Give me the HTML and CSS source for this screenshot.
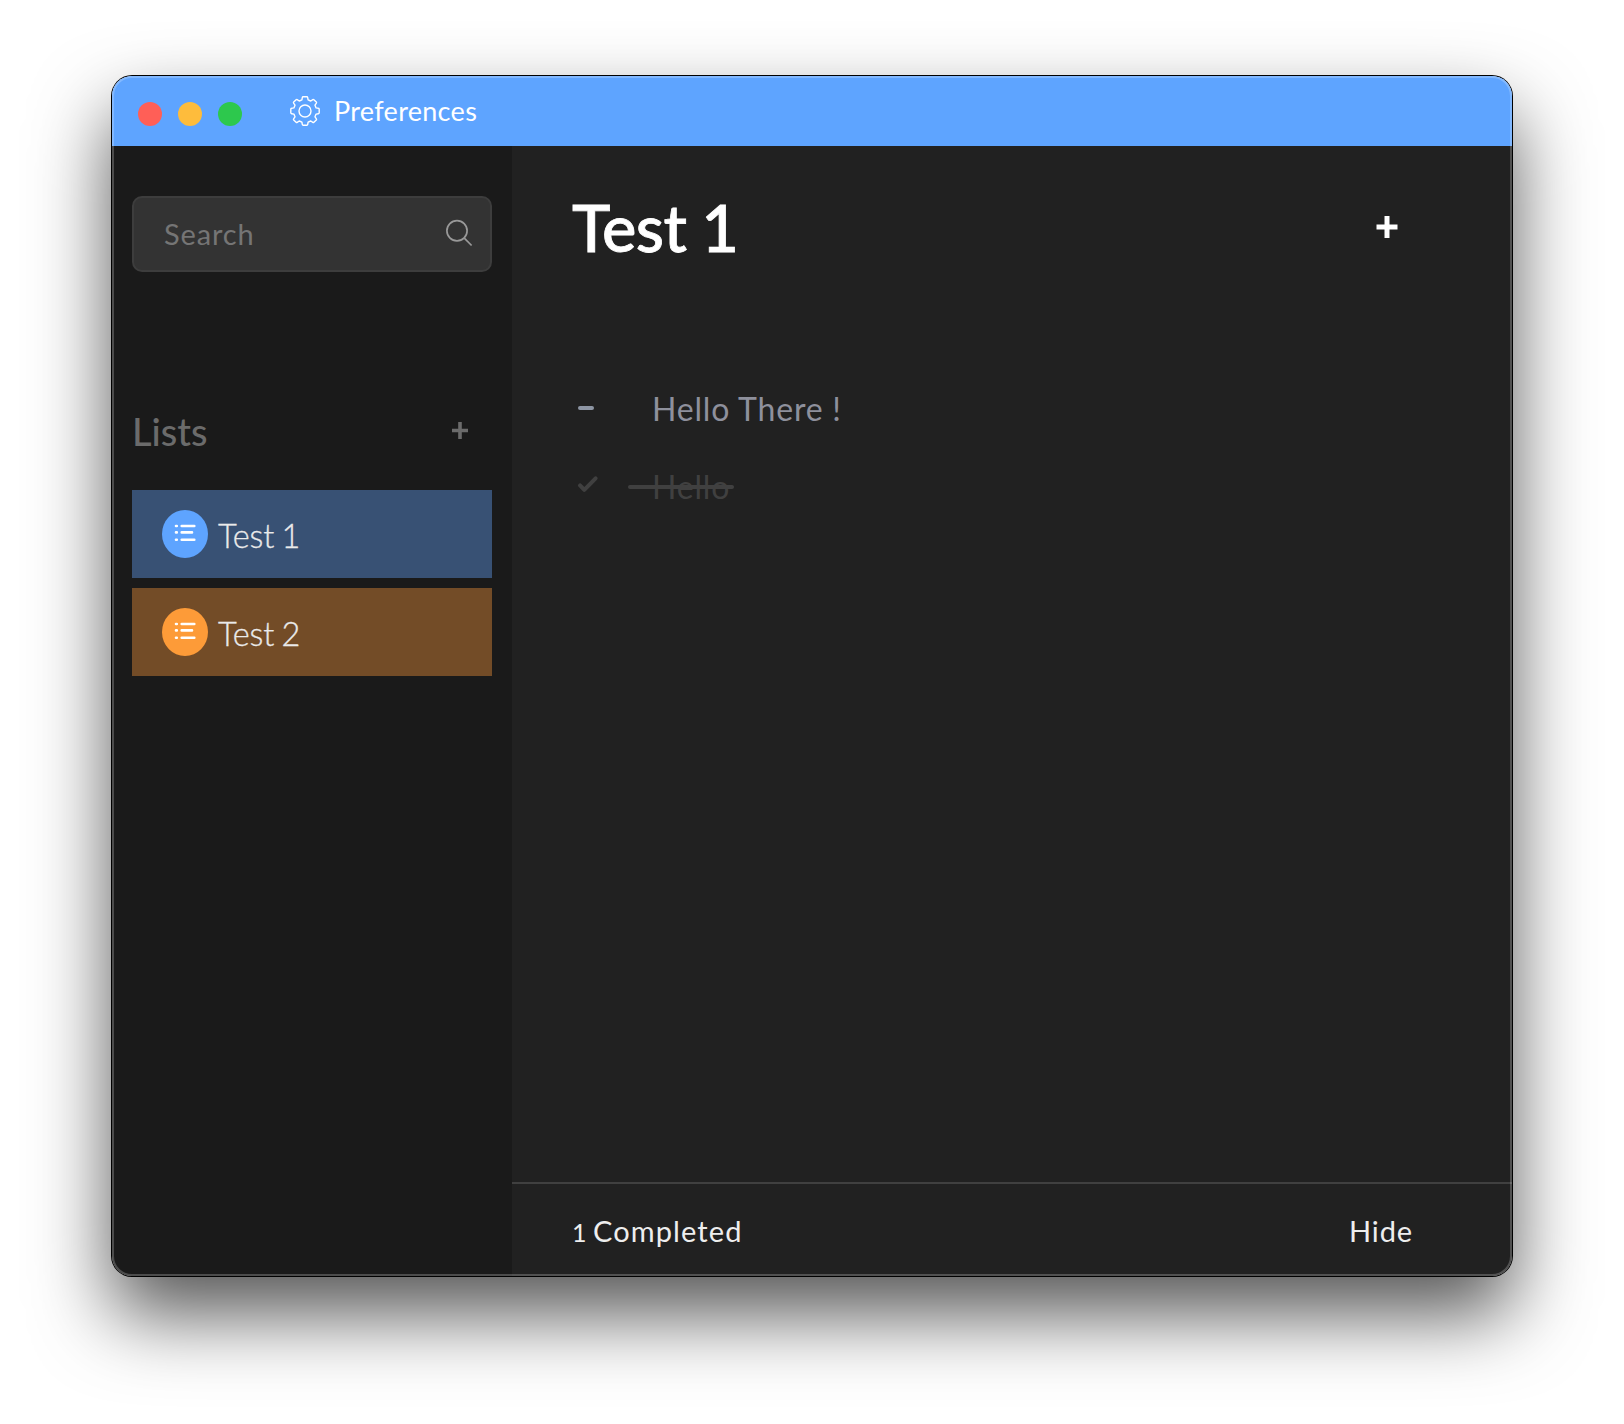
FILE: index.html
```html
<!DOCTYPE html>
<html lang="en">
<head>
<meta charset="utf-8">
<title>Test 1</title>
<link rel="stylesheet" href="styles.css">
</head>
<body>
<div class="window">
  <header class="titlebar">
    <div class="lights"><i class="light red"></i><i class="light yellow"></i><i class="light green"></i></div>
    <svg class="gear" viewBox="0 0 30 30"><path d="M13.2.8h3.6q.8 0 .9.8l.4 2.3 2.7 1.1 2-1.4q.6-.4 1.1.1l2.4 2.4q.5.5.1 1.1l-1.4 2 1.1 2.7 2.3.4q.8.1.8.9v3.6q0 .8-.8.9l-2.3.4-1.1 2.7 1.4 2q.4.6-.1 1.1l-2.4 2.4q-.5.5-1.1.1l-2-1.4-2.7 1.1-.4 2.3q-.1.8-.9.8h-3.6q-.8 0-.9-.8l-.4-2.3-2.7-1.1-2 1.4q-.6.4-1.1-.1l-2.4-2.4q-.5-.5-.1-1.1l1.4-2-1.1-2.7-2.3-.4q-.8-.1-.8-.9v-3.6q0-.8.8-.9l2.3-.4 1.1-2.7-1.4-2q-.4-.6.1-1.1l2.4-2.4q.5-.5 1.1-.1l2 1.4 2.7-1.1.4-2.3q.1-.8.9-.8z"/><circle cx="15" cy="15" r="6"/></svg>
    <span class="prefs">Preferences</span>
  </header>
  <div class="body">
    <aside class="sidebar">
      <div class="search">
        <span class="placeholder">Search</span>
        <svg class="magnifier" viewBox="0 0 28 28"><circle cx="11" cy="10.7" r="10.1"/><path d="M18.3 18.2l7.3 7.3"/></svg>
      </div>
      <div class="lists-head">
        <h2 class="lists-title">Lists</h2>
        <svg class="plus-small" viewBox="0 0 16 17"><path d="M0 8.5h16M8 0v17"/></svg>
      </div>
      <div class="lists">
        <div class="list blue">
          <span class="badge"><svg class="list-icon" viewBox="0 0 22 18"><path d="M7.7 2h12.6M7.7 8.4h10.3M7.7 15.7h12.6M2 2h.8M2 8.4h.8M2 15.7h.8"/></svg></span>
          <span class="list-name">Test 1</span>
        </div>
        <div class="list orange">
          <span class="badge"><svg class="list-icon" viewBox="0 0 22 18"><path d="M7.7 2h12.6M7.7 8.4h10.3M7.7 15.7h12.6M2 2h.8M2 8.4h.8M2 15.7h.8"/></svg></span>
          <span class="list-name">Test 2</span>
        </div>
      </div>
    </aside>
    <main class="main">
      <div class="main-head">
        <h1 class="title">Test 1</h1>
        <svg class="plus-large" viewBox="0 0 22 22"><path d="M.5 11h21M11 0v22"/></svg>
      </div>
      <div class="tasks">
        <div class="task">
          <svg class="mark" viewBox="0 0 20 20"><path d="M2 9h12"/></svg>
          <span class="task-name">Hello There !</span>
        </div>
        <div class="task done">
          <svg class="mark" viewBox="0 0 20 20"><path d="M2 8.4l4.3 4.5L17.6 1.3"/></svg>
          <span class="task-name">Hello</span>
        </div>
      </div>
      <footer class="footer">
        <span class="completed"><span class="count">1</span> Completed</span>
        <span class="hide">Hide</span>
      </footer>
    </main>
  </div>
</div>
</body>
</html>
```
FILE: styles.css
```css
* { box-sizing: border-box; }
body {
  margin: 0;
  height: 1424px;
  padding: 76px 112px 148px;
  background: #fff;
  font-family: Lato, sans-serif;
  overflow: hidden;
}
svg { display: block; fill: none; flex: none; overflow: visible; }
h1, h2 { margin: 0; }
.window {
  position: relative;
  width: 1400px;
  height: 1200px;
  display: flex;
  flex-direction: column;
  border-radius: 20px;
  overflow: hidden;
  box-shadow: 0 0 0 1px #000, 0 38px 78px rgba(0, 0, 0, .67);
}
/* light rim along the window edge */
.window::after {
  content: "";
  position: absolute;
  inset: 0;
  border-radius: 20px;
  box-shadow: inset 0 0 0 2px rgba(255, 255, 255, .22);
  pointer-events: none;
}
.titlebar {
  height: 70px;
  flex: none;
  display: flex;
  align-items: center;
  padding-left: 26px;
  background: #5ea4ff;
  color: #fff;
}
.lights { display: flex; gap: 16px; margin-top: 6px; }
.light { width: 24px; height: 24px; border-radius: 50%; }
.red { background: #ff5f57; }
.yellow { background: #febc3c; }
.green { background: #2dc84d; }
.gear { width: 30px; height: 30px; margin-left: 48px; stroke: #fff; stroke-width: 1.4; stroke-linejoin: round; }
.prefs { margin-left: 14px; font-size: 27px; line-height: 32px; letter-spacing: .3px; }
.body { flex: 1; display: flex; }
.sidebar { width: 400px; padding: 50px 20px 0; background: #1a1a1a; }
.search {
  height: 76px;
  display: flex;
  align-items: center;
  justify-content: space-between;
  padding: 0 16px 0 30px;
  border: 2px solid #3d3d3d;
  border-radius: 10px;
  background: #333;
  color: #757575;
  font-size: 29px;
}
.placeholder { letter-spacing: .85px; margin-top: -1px; }
.magnifier { width: 28px; height: 28px; stroke: #999; stroke-width: 1.7; }
.lists-head {
  display: flex;
  align-items: center;
  justify-content: space-between;
  height: 50px;
  margin-top: 134px;
  padding-right: 24px;
  color: #6b6b6b;
}
.lists-title { font-size: 38px; font-weight: 500; line-height: 50px; }
.plus-small { width: 16px; height: 17px; margin-top: -2px; stroke: #6b6b6b; stroke-width: 3.6; }
.lists { display: flex; flex-direction: column; gap: 10px; margin-top: 34px; }
.list { height: 88px; display: flex; align-items: center; gap: 10px; padding-left: 30px; }
.blue { background: #385174; }
.orange { background: #734c27; }
.badge { width: 46px; height: 48px; border-radius: 50%; display: flex; align-items: center; justify-content: center; }
.blue .badge { background: #5ea4ff; }
.orange .badge { background: #fd9b38; }
.list-icon { width: 22px; height: 18px; margin-top: -2px; stroke: #fff; stroke-width: 2.6; stroke-linecap: round; }
.list-name {
  margin-top: 3px;
  color: #eaeaea;
  font-size: 32.5px;
  font-weight: 300;
  letter-spacing: -.1px;
  word-spacing: -1.5px;
  -webkit-text-stroke: .3px #eaeaea;
}
.main { width: 1000px; display: flex; flex-direction: column; background: #212121; }
.main-head { display: flex; justify-content: space-between; align-items: center; padding: 41px 114px 0 60px; }
.title {
  color: #fff;
  font-size: 65px;
  font-weight: 500;
  line-height: 80px;
  letter-spacing: -.6px;
  word-spacing: -1px;
  -webkit-text-stroke: .8px #fff;
}
.plus-large { width: 22px; height: 22px; stroke: #fff; stroke-width: 5; }
.tasks { flex: 1; padding: 103px 66px 0; }
.task { height: 78px; display: flex; align-items: center; color: #8e909c; }
.mark { width: 20px; height: 20px; stroke: #8d95a3; stroke-width: 4; stroke-linecap: round; stroke-linejoin: round; }
.task-name { position: relative; margin: -1px 0 0 54px; font-size: 32px; line-height: 40px; letter-spacing: .8px; }
.done { color: #404040; }
.done .mark { stroke: #404040; }
.done .task-name::after {
  content: "";
  position: absolute;
  left: -24px;
  width: 106px;
  top: 18px;
  height: 4px;
  border-radius: 2px;
  background: #404040;
}
.footer {
  height: 94px;
  display: flex;
  align-items: center;
  justify-content: space-between;
  padding: 0 99px 0 60px;
  border-top: 2px solid #404040;
  color: #eee;
  font-size: 29px;
  letter-spacing: 1.1px;
}
.count { font-size: 25px; letter-spacing: 0; margin-right: -2px; }
.hide { letter-spacing: .9px; }
```
